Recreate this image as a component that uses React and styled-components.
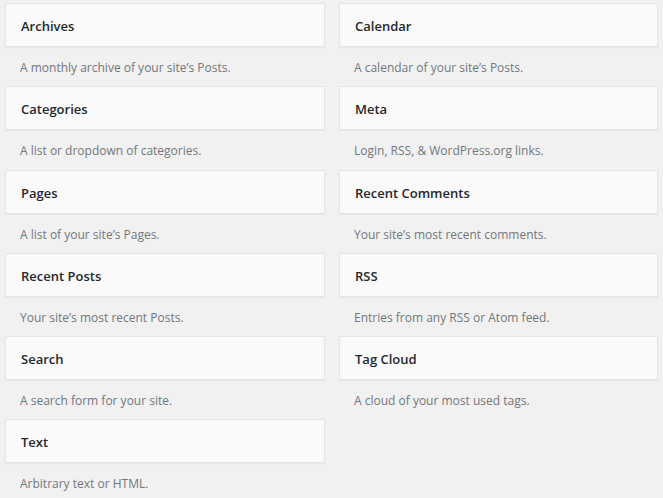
import React from "react";
import styled, { createGlobalStyle } from "styled-components";

const GlobalStyle = createGlobalStyle`
  html, body {
    margin: 0;
    padding: 0;
    background: #f1f1f1;
  }
  body {
    font-family: "Open Sans", "Liberation Sans", sans-serif;
    -webkit-font-smoothing: antialiased;
  }
`;

const WidgetGrid = styled.div`
  display: grid;
  grid-template-columns: 320px 319px;
  column-gap: 14px;
  padding: 3px 0 0 5px;
`;

const Widget = styled.div`
  height: 83.3px;
`;

const WidgetTop = styled.div`
  box-sizing: border-box;
  height: 44px;
  background: #fafafa;
  border: 1px solid #e5e5e5;
  box-shadow: 0 1px 1px rgba(0, 0, 0, 0.04);
  display: flex;
  align-items: center;
  padding: 3px 15px 0;
`;

const WidgetTitle = styled.h3`
  margin: 0;
  font-size: 13px;
  font-weight: 600;
  color: #23282d;
  line-height: 1;
`;

const WidgetDescription = styled.p`
  margin: 0;
  padding: 13px 15px 0;
  font-size: 12px;
  line-height: 16px;
  color: #72777c;
`;

const widgets = [
  ["Archives", "A monthly archive of your site\u2019s Posts."],
  ["Calendar", "A calendar of your site\u2019s Posts."],
  ["Categories", "A list or dropdown of categories."],
  ["Meta", "Login, RSS, & WordPress.org links."],
  ["Pages", "A list of your site\u2019s Pages."],
  ["Recent Comments", "Your site\u2019s most recent comments."],
  ["Recent Posts", "Your site\u2019s most recent Posts."],
  ["RSS", "Entries from any RSS or Atom feed."],
  ["Search", "A search form for your site."],
  ["Tag Cloud", "A cloud of your most used tags."],
  ["Text", "Arbitrary text or HTML."],
];

const App = () => (
  <>
    <GlobalStyle />
    <WidgetGrid>
      {widgets.map(([title, desc]) => (
        <Widget key={title}>
          <WidgetTop>
            <WidgetTitle>{title}</WidgetTitle>
          </WidgetTop>
          <WidgetDescription>{desc}</WidgetDescription>
        </Widget>
      ))}
    </WidgetGrid>
  </>
);

export default App;
